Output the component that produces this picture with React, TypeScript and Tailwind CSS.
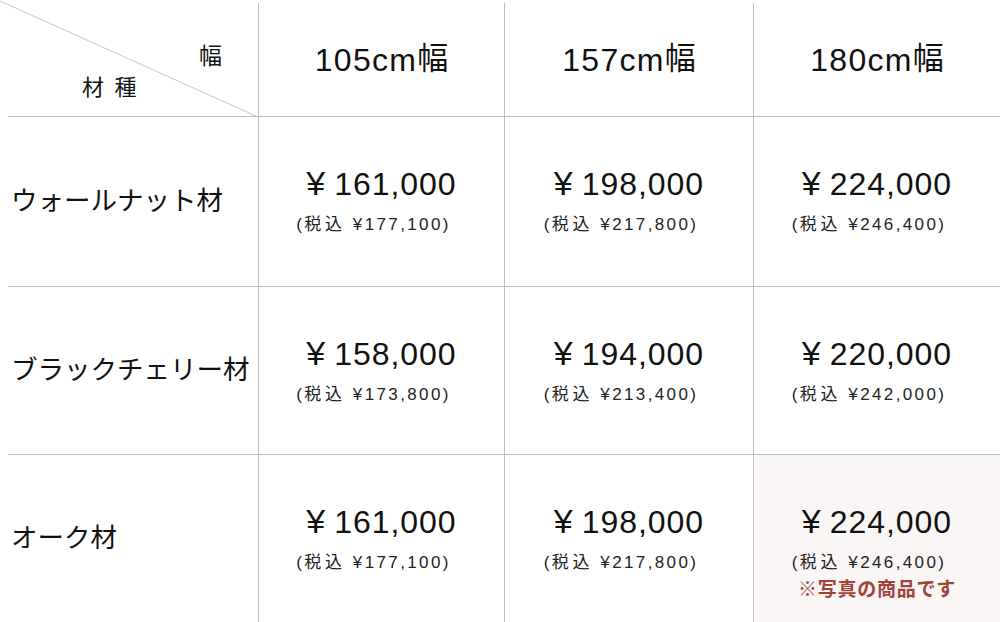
import React from 'react';

const widths = ['105cm', '157cm', '180cm'];

const rows = [
  {
    name: 'ウォールナット材',
    prices: [
      ['161,000', '177,100'],
      ['198,000', '217,800'],
      ['224,000', '246,400'],
    ],
    h: 'h-[170px]',
  },
  {
    name: 'ブラックチェリー材',
    prices: [
      ['158,000', '173,800'],
      ['194,000', '213,400'],
      ['220,000', '242,000'],
    ],
    h: 'h-[168px]',
  },
  {
    name: 'オーク材',
    prices: [
      ['161,000', '177,100'],
      ['198,000', '217,800'],
      ['224,000', '246,400'],
    ],
    h: 'h-[168px]',
  },
];

const gridCols = 'grid grid-cols-[250px_246px_249px_247px] ml-2 border-b border-[#bcbcbc]';

const App = () => {
  return (
    <div
      className="w-[1000px] h-[622px] overflow-hidden bg-white pt-[3px] text-[#111]"
      style={{ fontFamily: '"Liberation Sans", "Noto Sans CJK JP", sans-serif' }}
    >
      {/* header */}
      <div className={`${gridCols} h-[114px]`}>
        <div className="relative pt-[38px] text-[22px] leading-[31px]">
          <svg
            className="absolute left-[-8px] top-[-2px] overflow-visible"
            width="258"
            height="116"
            viewBox="0 0 258 116"
          >
            <line x1="0" y1="0" x2="258" y2="116" stroke="#c6c6c6" strokeWidth="1" />
          </svg>
          <div className="text-right pr-[34px]">
            <span className="inline-block text-[23px] translate-x-[-2px]">幅</span>
          </div>
          <div className="pl-[74px] tracking-[0.1em]">材 種</div>
        </div>
        {widths.map((w) => (
          <div
            key={w}
            className="flex items-center justify-center border-l border-[#bcbcbc] text-[32px] tracking-[0.04em]"
          >
            {w}
            <span className="text-[31px] tracking-normal">幅</span>
          </div>
        ))}
      </div>

      {rows.map((row, ri) => (
        <div key={row.name} className={`${gridCols} ${row.h}`}>
          <div className="flex items-center pl-[3px] text-[26.5px]">{row.name}</div>
          {row.prices.map(([p, t], ci) => {
            const featured = ri === 2 && ci === 2;
            return (
              <div
                key={ci}
                className={`flex flex-col items-center pt-[47px] border-l border-[#bcbcbc] ${
                  featured ? 'bg-[#faf6f6]' : ''
                }`}
              >
                <div className="text-[32px] leading-[38px] tracking-[0.03em]">
                  <span className="mr-[8px] text-[34px]">¥</span>
                  {p}
                </div>
                <div className="mt-[10px] mr-[16px] text-[17px] leading-[24px] tracking-[0.14em] text-[#222]">
                  (<span className="tracking-[0.22em]">税込</span> ¥{t})
                </div>
                {featured && (
                  <div className="mt-[2px] text-[19px] leading-[26px] font-bold text-[#a0433a] tracking-[0.04em]">
                    ※写真の商品です
                  </div>
                )}
              </div>
            );
          })}
        </div>
      ))}
    </div>
  );
};

export default App;
